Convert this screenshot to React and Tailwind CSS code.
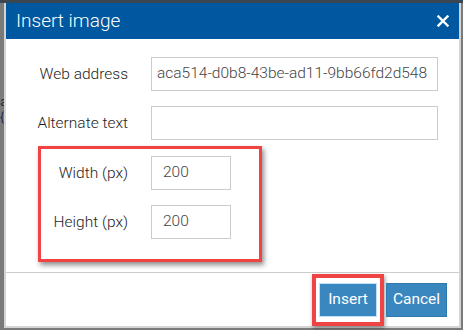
export default function App() {
  return (
    <div className="relative h-[330px] w-[463px] overflow-hidden bg-[#7a7a7a] font-['Roboto','Liberation_Sans',sans-serif]">
      {/* bits of the page behind the modal */}
      <div className="absolute left-0 top-0 h-[3px] w-full bg-[#3a4652]" />
      <div className="absolute left-0 top-[95px] text-[13px] leading-[13px] text-[#1b2a3a]">a</div>
      <div className="absolute left-0 top-[111px] text-[12px] leading-[12px] text-[#1b2a3a]">{"{"}</div>

      <div className="relative ml-[4px] mt-[3px] flex h-[325px] w-[457px] flex-col border-x-2 border-b-2 border-[#d4d4d4] bg-white">
        <header className="flex h-[36px] shrink-0 items-center justify-between bg-[#0058a0] pl-[10px] pr-[10px]">
          <h1 className="text-[19px] font-light text-white">Insert image</h1>
          <svg width="12" height="12" viewBox="0 0 12 12" className="text-white">
            <path d="M1.5 1.5l9 9M10.5 1.5l-9 9" stroke="currentColor" strokeWidth="2.4" strokeLinecap="square" />
          </svg>
        </header>

        <div className="flex flex-col pt-[18px] text-[15.5px] font-light">
          <div className="flex items-center">
            <label className="w-[122px] pt-[1px] text-right text-[#1e1e1e]">Web address</label>
            <div className="ml-[23px] flex h-[34px] w-[287px] items-center overflow-hidden whitespace-nowrap border border-[#cccccc] px-[5px] text-[#444]">
              aca514-d0b8-43be-ad11-9bb66fd2d548
            </div>
          </div>
          <div className="mt-[15px] flex items-center">
            <label className="w-[122px] pt-[1px] text-right text-[#1e1e1e]">Alternate text</label>
            <div className="ml-[23px] h-[34px] w-[287px] border border-[#cccccc]" />
          </div>

          <div className="ml-[32px] mt-[6px] flex h-[116px] w-[224px] flex-col border-[3px] border-[#f04343] pt-[7px] shadow-[2px_3px_5px_rgba(0,0,0,0.45)]">
            <div className="flex items-center">
              <label className="w-[87px] pt-[1px] text-right text-[#1e1e1e]">Width (px)</label>
              <div className="ml-[23px] flex h-[34px] w-[80px] items-center border border-[#cccccc] px-[11px] text-[#444]">200</div>
            </div>
            <div className="mt-[15px] flex items-center">
              <label className="w-[87px] pt-[1px] text-right text-[#1e1e1e]">Height (px)</label>
              <div className="ml-[23px] flex h-[34px] w-[80px] items-center border border-[#cccccc] px-[11px] text-[#444]">200</div>
            </div>
          </div>
        </div>

        <div className="mt-[10px] flex flex-1 items-start justify-end border-t border-[#cccccc] pr-[12px] pt-[1px] text-[15.5px]">
          <div className="border-[4px] border-[#f04343] px-[3px] py-[5px] shadow-[1px_2px_4px_rgba(0,0,0,0.4)]">
            <button className="flex h-[34px] w-[58px] items-center justify-center border border-[#bfe0f5] bg-[#3a87bf] text-white">Insert</button>
          </div>
          <button className="ml-[2px] mt-[9px] flex h-[34px] w-[61px] items-center justify-center border border-[#2f78ae] bg-[#3a87bf] text-white">Cancel</button>
        </div>
      </div>
    </div>
  );
}
